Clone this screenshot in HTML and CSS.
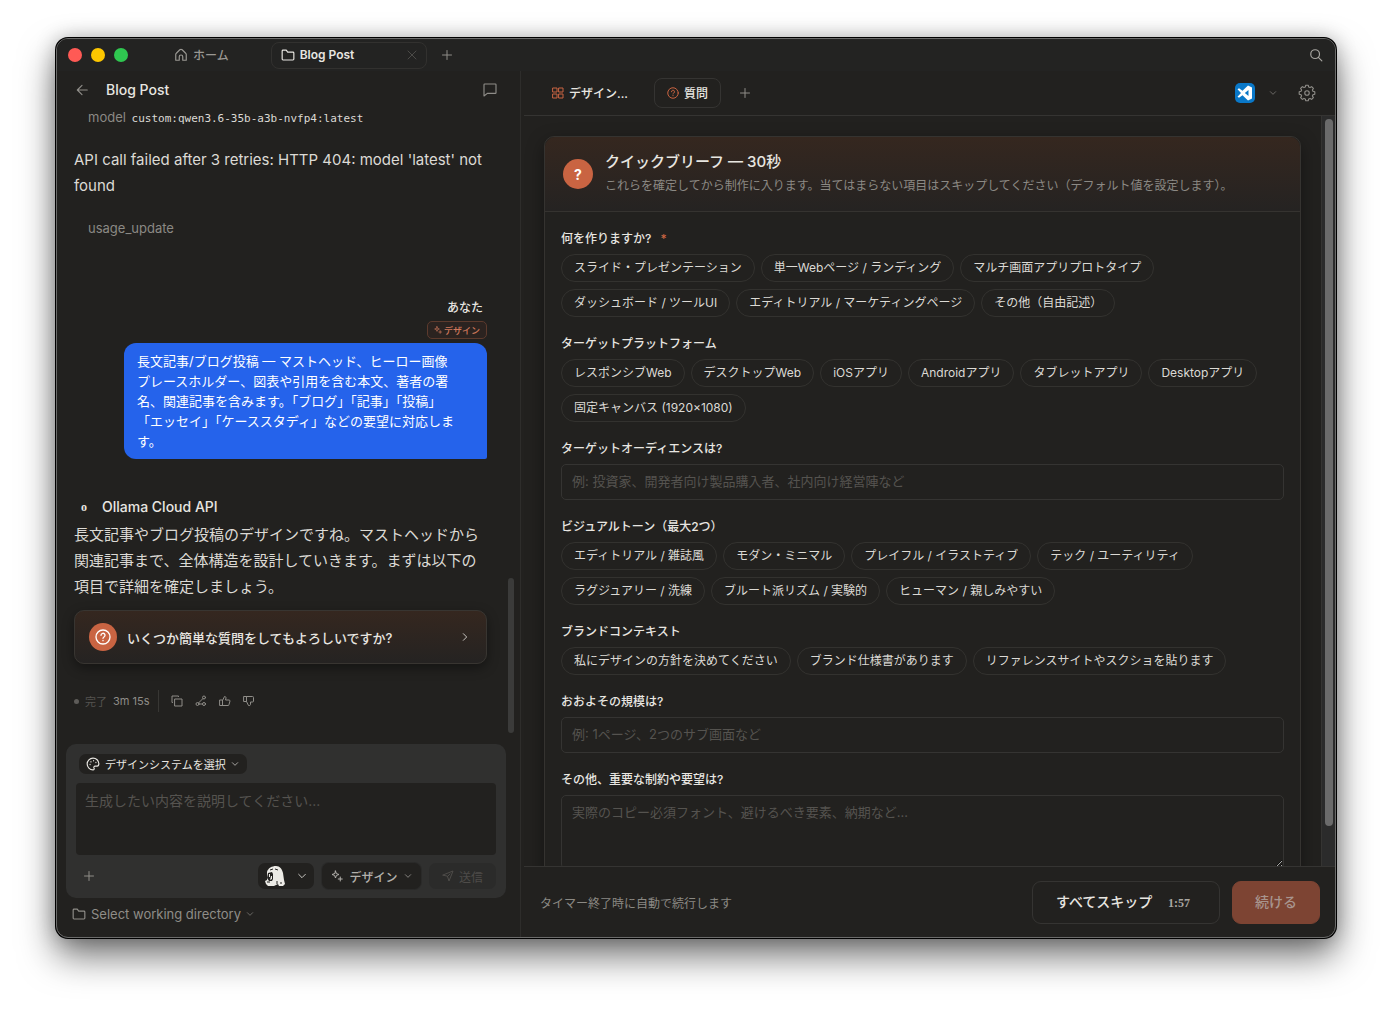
FILE: index.html
```
<!DOCTYPE html>
<html lang="ja">
<head>
<meta charset="UTF-8">
<meta name="viewport" content="width=device-width, initial-scale=1.0">
<title>Blog Post</title>
<link rel="stylesheet" href="styles.css">
</head>
<body>
    <!-- shared icons -->
    <svg class="sprite" aria-hidden="true">
        <symbol id="i-plus" viewBox="0 0 24 24"><path d="M12 3v18M3 12h18"/></symbol>
        <symbol id="i-down" viewBox="0 0 24 24"><path d="M4 8l8 8 8-8"/></symbol>
        <symbol id="i-right" viewBox="0 0 24 24"><path d="M8 4l8 8-8 8"/></symbol>
        <symbol id="i-x" viewBox="0 0 24 24"><path d="M4 4l16 16M20 4L4 20"/></symbol>
        <symbol id="i-back" viewBox="0 0 24 24"><path d="M21 12H4M12 4l-8 8 8 8"/></symbol>
        <symbol id="i-home" viewBox="0 0 24 24"><path d="M3 11a3 3 0 0 1 1-2l6-6q2-1.500 4 0l6 6a3 3 0 0 1 1 2v10h-6v-6a3 3 0 0 0-6 0v6H3z"/></symbol>
        <symbol id="i-folder" viewBox="0 0 24 24"><path d="M2 5a1.500 1.500 0 0 1 1.500-1.500H9L11.500 7H20.500A1.500 1.500 0 0 1 22 8.500V19a1.500 1.500 0 0 1-1.500 1.500h-17A1.500 1.500 0 0 1 2 19z"/></symbol>
        <symbol id="i-search" viewBox="0 0 24 24"><circle cx="10.500" cy="10.500" r="7.500"/><path d="M16 16l6 6"/></symbol>
        <symbol id="i-comment" viewBox="0 0 24 24"><path stroke-width="1.700" d="M4 3h16q1 0 1 1v12q0 1-1 1H8l-5 4V4q0-1 1-1z"/></symbol>
        <symbol id="i-help" viewBox="0 0 24 24"><circle cx="12" cy="12" r="10.500"/><path d="M9 9.500a3 3 0 1 1 4.500 2.500c-1 .6-1.500 1-1.500 2M12 17v.5"/></symbol>
        <symbol id="i-grid" viewBox="0 0 24 24"><path d="M2 2h8v8H2zM14 2h8v8h-8zM2 14h8v8H2zM14 14h8v8h-8z"/></symbol>
        <symbol id="i-gear" viewBox="0 0 24 24"><g stroke-width="1.500"><circle cx="12" cy="12" r="3"/><path d="M19.900 9.700L22.400 10.400V13.600L19.900 14.300 19.200 16 20.500 18.200 18.200 20.500 16 19.200 14.300 19.900 13.600 22.400H10.400L9.700 19.900 8 19.200 5.800 20.500 3.500 18.200 4.800 16 4.100 14.300 1.600 13.600V10.400L4.100 9.700 4.800 8 3.500 5.800 5.800 3.500 8 4.800 9.700 4.100 10.400 1.600H13.600L14.300 4.100 16 4.800 18.200 3.500 20.500 5.800 19.200 8z"/></g></symbol>
        <symbol id="i-spark" viewBox="0 0 24 24"><path d="M9 2l1.800 5.200L16 9l-5.200 1.800L9 16l-1.800-5.200L2 9l5.200-1.800zM18.500 14v8M14.500 18h8"/></symbol>
        <symbol id="i-copy" viewBox="0 0 24 24"><path d="M8 8h14v14H8zM3 15H2V2h13v1"/></symbol>
        <symbol id="i-share" viewBox="0 0 24 24"><circle cx="18" cy="5" r="3"/><circle cx="5" cy="18" r="3"/><circle cx="18" cy="18" r="3"/><path d="M8 18h7M16 7L7 16"/></symbol>
        <symbol id="i-up" viewBox="0 0 24 24"><path d="M2 10h5v11H2zM7 11l4-8c2 0 3 1 3 3l-1 4h7a2 2 0 0 1 2 2l-2 7a2 2 0 0 1-2 2H7"/></symbol>
        <symbol id="i-thumbdown" viewBox="0 0 24 24"><path d="M2 3h5v10H2zM7 3h12a2 2 0 0 1 2 2v7a2 2 0 0 1-2 2h-4v5a3 3 0 0 1-4 2L7 13"/></symbol>
        <symbol id="i-palette" viewBox="0 0 24 24"><path d="M12 2a10 10 0 1 0 0 20c2 0 2.500-1.500 1.700-3-.8-1.700.3-3.300 2-3.300H19c2 0 3-1.500 3-4C22 6 17.500 2 12 2z"/><path d="M7 12.500v.5M8.500 8v.5M13 6v.5M17 9v.5"/></symbol>
        <symbol id="i-send" viewBox="0 0 24 24"><path d="M2 10L22 2l-8 20-3-9zM11 13l5-5"/></symbol>
    </svg>

    <div class="window">
        <header class="titlebar">
            <div class="lights"><span class="red"></span><span class="yellow"></span><span class="green"></span></div>
            <a class="home-tab" href="#"><svg class="icon s14"><use href="#i-home"/></svg><span>ホーム</span></a>
            <div class="file-tab">
                <svg class="icon s14"><use href="#i-folder"/></svg>
                <span>Blog Post</span>
                <button type="button" class="bare close" aria-label="閉じる"><svg class="icon s12"><use href="#i-x"/></svg></button>
            </div>
            <button type="button" class="bare new-tab" aria-label="新しいタブ"><svg class="icon s12"><use href="#i-plus"/></svg></button>
            <button type="button" class="bare search" aria-label="検索"><svg class="icon s14"><use href="#i-search"/></svg></button>
        </header>

        <main class="panes">
            <section class="chat">
                <div class="chat-head">
                    <button type="button" class="bare" aria-label="戻る"><svg class="icon s14"><use href="#i-back"/></svg></button>
                    <h1>Blog Post</h1>
                    <button type="button" class="bare comment" aria-label="コメント"><svg class="icon s16"><use href="#i-comment"/></svg></button>
                </div>

                <div class="chat-log">
                    <div class="meta">model <code>custom:qwen3.6-35b-a3b-nvfp4:latest</code></div>
                    <p class="prose error">API call failed after 3 retries: HTTP 404: model 'latest' not found</p>
                    <div class="meta usage">usage_update</div>

                    <div class="user-msg">
                        <strong>あなた</strong>
                        <span class="badge"><svg class="icon s8"><use href="#i-spark"/></svg>デザイン</span>
                        <p class="bubble">長文記事/ブログ投稿 — マストヘッド、ヒーロー画像プレースホルダー、図表や引用を含む本文、著者の署名、関連記事を含みます。「ブログ」「記事」「投稿」「エッセイ」「ケーススタディ」などの要望に対応します。</p>
                    </div>

                    <div class="agent">
                        <span class="agent-mark">o</span>
                        <strong>Ollama Cloud API</strong>
                    </div>
                    <p class="prose">長文記事やブログ投稿のデザインですね。マストヘッドから関連記事まで、全体構造を設計していきます。まずは以下の項目で詳細を確定しましょう。</p>

                    <button type="button" class="ask-card">
                        <span class="dot"><svg class="icon s16"><use href="#i-help"/></svg></span>
                        <span class="ask-text">いくつか簡単な質問をしてもよろしいですか?</span>
                        <svg class="icon s10"><use href="#i-right"/></svg>
                    </button>

                    <div class="status">
                        <span class="bullet"></span>
                        <span class="done">完了</span>
                        <span class="time">3m 15s</span>
                        <button type="button" class="bare" aria-label="コピー"><svg class="icon s12"><use href="#i-copy"/></svg></button>
                        <button type="button" class="bare" aria-label="共有"><svg class="icon s12"><use href="#i-share"/></svg></button>
                        <button type="button" class="bare" aria-label="良い"><svg class="icon s12"><use href="#i-up"/></svg></button>
                        <button type="button" class="bare" aria-label="悪い"><svg class="icon s12"><use href="#i-thumbdown"/></svg></button>
                    </div>
                    <span class="chat-thumb"></span>
                </div>

                <form class="composer">
                    <button type="button" class="pill system"><svg class="icon s14"><use href="#i-palette"/></svg>デザインシステムを選択<svg class="icon s8"><use href="#i-down"/></svg></button>
                    <textarea aria-label="メッセージ" placeholder="生成したい内容を説明してください..."></textarea>
                    <div class="tools">
                        <button type="button" class="bare add" aria-label="追加"><svg class="icon s12"><use href="#i-plus"/></svg></button>
                        <button type="button" class="pill model" aria-label="モデル">
                            <svg class="avatar" viewBox="0 0 20 20">
                                <path fill="#ecebe6" d="M2 6C3 2 7 0 11 0c4 0 6 3 7 7l1 7 1 4-2 2h-4l-1-2-2 1-2 1H3l-2-2-1-3 2-1z"/>
                                <path fill="#22211f" d="M3 7l4-1 1 2v5l-1 2-3 0-2-3z"/>
                                <path fill="#ecebe6" d="M4 8h1v3H4zM6 10h1v3l-2 1z"/>
                                <path fill="none" stroke="#22211f" d="M5 4l3-1M10 3l3 1M2 16h3M12 15v3M16 16v2"/>
                            </svg>
                            <svg class="icon s10"><use href="#i-down"/></svg>
                        </button>
                        <button type="button" class="pill mode"><svg class="icon s12"><use href="#i-spark"/></svg>デザイン<svg class="icon s8"><use href="#i-down"/></svg></button>
                        <button type="submit" class="pill send" disabled><svg class="icon s12"><use href="#i-send"/></svg>送信</button>
                    </div>
                </form>
                <button type="button" class="bare workdir"><svg class="icon s14"><use href="#i-folder"/></svg>Select working directory<svg class="icon s8"><use href="#i-down"/></svg></button>
            </section>

            <section class="work">
                <nav class="work-tabs">
                    <button type="button" class="tab"><svg class="icon s12 accent"><use href="#i-grid"/></svg><span>デザイン...</span></button>
                    <button type="button" class="tab active"><svg class="icon s12 accent"><use href="#i-help"/></svg><span>質問</span></button>
                    <button type="button" class="bare add-tab" aria-label="タブを追加"><svg class="icon s12"><use href="#i-plus"/></svg></button>
                    <button type="button" class="bare editor" aria-label="エディタで開く">
                        <svg class="vscode" viewBox="0 0 20 20">
                            <rect width="20" height="20" rx="5" fill="#0a78c8"/>
                            <path fill="#fff" fill-rule="evenodd" d="M13 2.500L17 4.500V15.500L13 17.500 7.500 12.200 4 14.800 2.500 13.800 6 10 2.500 6.200 4 5.200 7.500 7.800zM13.500 7L9.800 10 13.500 13z"/>
                        </svg>
                        <svg class="icon s8"><use href="#i-down"/></svg>
                    </button>
                    <button type="button" class="bare gear" aria-label="設定"><svg class="icon s18"><use href="#i-gear"/></svg></button>
                </nav>

                <div class="work-body">
                    <form class="brief" id="brief">
                        <div class="brief-head">
                            <span class="dot q">?</span>
                            <div>
                                <h2>クイックブリーフ — 30秒</h2>
                                <p>これらを確定してから制作に入ります。当てはまらない項目はスキップしてください（デフォルト値を設定します）。</p>
                            </div>
                        </div>
                        <div class="brief-body">
                            <fieldset>
                                <legend>何を作りますか? <span class="req">*</span></legend>
                                <div class="chips">
                                    <button type="button">スライド・プレゼンテーション</button>
                                    <button type="button">単一Webページ / ランディング</button>
                                    <button type="button">マルチ画面アプリプロトタイプ</button>
                                    <button type="button">ダッシュボード / ツールUI</button>
                                    <button type="button">エディトリアル / マーケティングページ</button>
                                    <button type="button">その他（自由記述）</button>
                                </div>
                            </fieldset>
                            <fieldset>
                                <legend>ターゲットプラットフォーム</legend>
                                <div class="chips">
                                    <button type="button">レスポンシブWeb</button>
                                    <button type="button">デスクトップWeb</button>
                                    <button type="button">iOSアプリ</button>
                                    <button type="button">Androidアプリ</button>
                                    <button type="button">タブレットアプリ</button>
                                    <button type="button">Desktopアプリ</button>
                                    <button type="button">固定キャンバス (1920×1080)</button>
                                </div>
                            </fieldset>
                            <div class="field">
                                <label for="audience">ターゲットオーディエンスは?</label>
                                <input type="text" id="audience" placeholder="例: 投資家、開発者向け製品購入者、社内向け経営陣など">
                            </div>
                            <fieldset>
                                <legend>ビジュアルトーン（最大2つ）</legend>
                                <div class="chips">
                                    <button type="button">エディトリアル / 雑誌風</button>
                                    <button type="button">モダン・ミニマル</button>
                                    <button type="button">プレイフル / イラストティブ</button>
                                    <button type="button">テック / ユーティリティ</button>
                                    <button type="button">ラグジュアリー / 洗練</button>
                                    <button type="button">ブルート派リズム / 実験的</button>
                                    <button type="button">ヒューマン / 親しみやすい</button>
                                </div>
                            </fieldset>
                            <fieldset>
                                <legend>ブランドコンテキスト</legend>
                                <div class="chips">
                                    <button type="button">私にデザインの方針を決めてください</button>
                                    <button type="button">ブランド仕様書があります</button>
                                    <button type="button">リファレンスサイトやスクショを貼ります</button>
                                </div>
                            </fieldset>
                            <div class="field">
                                <label for="scale">おおよその規模は?</label>
                                <input type="text" id="scale" placeholder="例: 1ページ、2つのサブ画面など">
                            </div>
                            <div class="field">
                                <label for="notes">その他、重要な制約や要望は?</label>
                                <textarea id="notes" placeholder="実際のコピー必須フォント、避けるべき要素、納期など..."></textarea>
                            </div>
                        </div>
                    </form>
                    <div class="track"><span class="track-thumb"></span></div>
                </div>

                <footer class="work-foot">
                    <span>タイマー終了時に自動で続行します</span>
                    <button type="button" class="skip">すべてスキップ <time>1:57</time></button>
                    <button type="submit" form="brief" class="go">続ける</button>
                </footer>
            </section>
        </main>
    </div>
</body>
</html>
```
FILE: styles.css
```
* {
    box-sizing: border-box;
}

body {
    margin: 0;
    padding: 38px 56px 74px;
    height: 100vh;
    background: #fff;
    color: #e8e6e1;
    font-family: Inter, "Noto Sans CJK JP", sans-serif;
    font-size: 12px;
    overflow: hidden;
}

h1, h2, p, fieldset, legend {
    margin: 0;
    padding: 0;
    border: 0;
}

button, input, textarea {
    font: inherit;
    color: inherit;
}

button {
    padding: 0;
    white-space: nowrap;
}

.sprite {
    display: none;
}

.icon {
    flex: none;
    fill: none;
    stroke: currentColor;
    stroke-width: 2;
    stroke-linecap: round;
    stroke-linejoin: round;
}

.s8 { width: 8px; height: 8px; }
.s10 { width: 10px; height: 10px; }
.s12 { width: 12px; height: 12px; }
.s14 { width: 14px; height: 14px; }
.s16 { width: 16px; height: 16px; }
.s18 { width: 18px; height: 18px; }

.accent {
    color: #c96442;
}

.bare {
    display: flex;
    align-items: center;
    background: none;
    border: 0;
    color: #8f8d88;
}

.window {
    height: 100%;
    display: flex;
    flex-direction: column;
    background: #22211f;
    border: 1px solid #6b6b6a;
    border-radius: 12px;
    box-shadow: 0 0 0 1px #000, 0 18px 36px rgba(0, 0, 0, 0.55), 0 0 20px rgba(0, 0, 0, 0.25);
    overflow: hidden;
}

/* title bar */
.titlebar {
    flex: none;
    height: 32px;
    display: flex;
    align-items: center;
    padding: 0 12px 0 11px;
    background: #232322;
}

.titlebar span {
    padding-bottom: 1px;
}

.lights {
    display: flex;
    gap: 9px;
}

.lights span {
    width: 14px;
    height: 14px;
    border-radius: 50%;
}

.red { background: #ff5a55; }
.yellow { background: #fdc700; }
.green { background: #2fc750; }

.home-tab {
    display: flex;
    align-items: center;
    gap: 5px;
    margin-left: 46px;
    color: #9a9893;
    font-weight: 500;
    text-decoration: none;
}

.file-tab {
    display: flex;
    align-items: center;
    gap: 5px;
    width: 156px;
    height: 27px;
    margin-left: 42px;
    padding: 0 8px 0 9px;
    border: 1px solid #32312f;
    border-radius: 8px;
    font-weight: 600;
}

.close {
    margin-left: auto;
    color: #4c4b48;
}

.new-tab {
    margin-left: 14px;
}

.search {
    margin-left: auto;
    color: #aaa8a3;
}

.panes {
    flex: 1;
    min-height: 0;
    display: grid;
    grid-template-columns: 463px minmax(0, 1fr);
}

/* chat pane */
.chat {
    display: flex;
    flex-direction: column;
    min-height: 0;
}

.chat-head {
    flex: none;
    display: flex;
    align-items: center;
    height: 37px;
    padding: 0 22px 0 18px;
}

.chat-head h1 {
    margin-left: 17px;
    font-size: 14px;
    font-weight: 500;
}

.comment {
    margin-left: auto;
}

.chat-log {
    position: relative;
    flex: 1;
    min-height: 0;
    padding: 0 33px 0 17px;
    overflow: hidden;
}

.meta {
    padding-left: 14px;
    font-size: 13px;
    line-height: 18px;
    color: #8b8984;
}

.meta code {
    margin-left: 2px;
    color: #dcdad5;
    font-family: "DejaVu Sans Mono", monospace;
    font-size: 11px;
}

.prose {
    font-size: 15px;
    line-height: 26px;
    color: #dcdad5;
}

.error {
    margin-top: 19px;
}

.usage {
    margin-top: 20px;
}

.user-msg {
    display: flex;
    flex-direction: column;
    align-items: flex-end;
    margin-top: 62px;
}

.user-msg strong {
    padding-right: 4px;
    line-height: 18px;
    font-weight: 500;
}

.badge {
    display: flex;
    align-items: center;
    gap: 2px;
    height: 18px;
    margin: 4px 0;
    padding: 0 6px;
    border: 1px solid #5c3a2d;
    border-radius: 5px;
    background: #2b2320;
    color: #d0795c;
    font-size: 9px;
    font-weight: 500;
}

.bubble {
    width: 363px;
    padding: 8px 28px 8px 13px;
    border-radius: 12px 12px 2px 12px;
    background: #2563eb;
    color: #fff;
    font-size: 13px;
    line-height: 20px;
}

.agent {
    display: flex;
    align-items: center;
    margin-top: 38px;
    line-height: 20px;
    font-size: 14px;
}

.agent strong {
    font-weight: 500;
}

.agent + .prose {
    margin-top: 5px;
}

.agent-mark {
    width: 20px;
    margin-right: 8px;
    font: 700 12px "Liberation Serif", serif;
    text-align: center;
}

.dot {
    flex: none;
    display: flex;
    align-items: center;
    justify-content: center;
    width: 28px;
    height: 28px;
    border-radius: 50%;
    background: #c96442;
    color: #fff;
}

.ask-card {
    display: flex;
    align-items: center;
    gap: 10px;
    width: 100%;
    height: 54px;
    margin-top: 10px;
    padding: 0 16px 0 14px;
    border: 1px solid #383531;
    border-radius: 10px;
    background: linear-gradient(#35271f, #252322);
    box-shadow: 0 4px 12px rgba(0, 0, 0, 0.4);
    font-size: 13px;
    font-weight: 500;
}

.ask-text {
    flex: 1;
    text-align: left;
}

.status {
    display: flex;
    align-items: center;
    gap: 12px;
    height: 22px;
    margin-top: 26px;
    color: #8f8d88;
    font-size: 11px;
}

.bullet {
    width: 5px;
    height: 5px;
    border-radius: 50%;
    background: #5e5c59;
}

.done {
    margin: 0 -6px;
    color: #55534f;
}

.time {
    height: 22px;
    padding-right: 8px;
    border-right: 1px solid #383734;
    line-height: 22px;
}

.chat-thumb {
    position: absolute;
    right: 6px;
    bottom: 11px;
    width: 6px;
    height: 155px;
    border-radius: 3px;
    background: #3b3b3a;
}

/* composer */
.composer {
    flex: none;
    margin: 0 14px 0 9px;
    padding: 10px 10px 9px;
    border-radius: 10px;
    background: #30302f;
}

.pill {
    display: flex;
    align-items: center;
    justify-content: center;
    border: 0;
    border-radius: 7px;
    background: #22211f;
}

.system {
    gap: 5px;
    height: 20px;
    margin-left: 3px;
    padding: 0 8px 0 7px;
    font-size: 11px;
}

.composer textarea {
    display: block;
    width: 100%;
    height: 72px;
    margin: 9px 0 8px;
    padding: 8px 9px;
    border: 0;
    border-radius: 4px;
    background: #22211f;
    font-size: 14px;
    line-height: 20px;
    resize: none;
}

::placeholder {
    color: #55534f;
}

.tools {
    display: flex;
    align-items: center;
    gap: 8px;
    height: 26px;
}

.add {
    margin: 0 auto 0 7px;
}

.model {
    gap: 12px;
    width: 56px;
    height: 26px;
}

.avatar {
    width: 20px;
    height: 20px;
}

.mode {
    gap: 6px;
    width: 99px;
    height: 26px;
    color: #b3b1ac;
    font-weight: 500;
    box-shadow: 0 0 0 1px #2a2a29;
}

.send {
    gap: 5px;
    width: 67px;
    height: 26px;
    background: #2b2b2a;
    color: #4e4c49;
}

.workdir {
    flex: none;
    gap: 5px;
    height: 39px;
    padding: 0 0 8px 15px;
    font-size: 13px;
}

/* work pane */
.work {
    display: flex;
    flex-direction: column;
    min-height: 0;
    padding-left: 3px;
    border-left: 1px solid #2e2d2b;
}

.work-tabs {
    flex: none;
    display: flex;
    align-items: center;
    height: 45px;
    padding: 0 19px 0 15px;
    border-bottom: 1px solid #353432;
}

.tab {
    display: flex;
    align-items: center;
    gap: 5px;
    height: 30px;
    padding: 0 12px;
    border: 1px solid transparent;
    border-radius: 8px;
    background: none;
    font-weight: 500;
}

.tab span {
    padding-bottom: 2px;
}

.tab.active {
    margin-left: 13px;
    border-color: #353432;
}

.add-tab {
    margin-left: 18px;
}

.editor {
    gap: 14px;
    margin-left: auto;
}

.vscode {
    width: 20px;
    height: 20px;
}

.gear {
    margin-left: 21px;
}

.work-body {
    flex: 1;
    min-height: 0;
    display: flex;
    overflow: hidden;
}

.brief {
    flex: 1;
    min-width: 0;
    height: max-content;
    margin: 20px;
    border: 1px solid #353330;
    border-radius: 10px;
    box-shadow: 0 6px 18px rgba(0, 0, 0, 0.4);
}

.brief-head {
    display: flex;
    align-items: center;
    gap: 12px;
    height: 75px;
    padding: 0 18px;
    border-bottom: 1px solid #353330;
    border-radius: 10px 10px 0 0;
    background: linear-gradient(#35271f, #252322);
}

.q {
    width: 30px;
    height: 30px;
    font-size: 14px;
    font-weight: 700;
}

.brief h2 {
    font-size: 15px;
    font-weight: 500;
    line-height: 24px;
}

.brief-head p {
    color: #8b8984;
    line-height: 24px;
}

.brief-body {
    display: flex;
    flex-direction: column;
    gap: 18px;
    padding: 18px 16px;
}

legend, .field label {
    display: block;
    height: 18px;
    margin-bottom: 6px;
    font-weight: 500;
    line-height: 18px;
}

.req {
    margin-left: 6px;
    color: #c96442;
}

.chips {
    display: flex;
    flex-wrap: wrap;
    gap: 7px 6px;
}

.chips button {
    height: 28px;
    padding: 0 12px 3px;
    border: 1px solid #33322f;
    border-radius: 14px;
    background: none;
    color: #dcdad5;
}

.field input, .field textarea {
    display: block;
    width: 100%;
    height: 36px;
    padding: 0 10px 3px;
    border: 1px solid #353432;
    border-radius: 5px;
    background: none;
    font-size: 13px;
}

.field textarea {
    height: 74px;
    padding: 7px 10px;
    line-height: 18px;
    resize: vertical;
}

.track {
    flex: none;
    width: 14px;
    padding: 3px;
    border-left: 1px solid #353432;
    background: #2b2b2b;
}

.track-thumb {
    display: block;
    width: 8px;
    height: 95%;
    border-radius: 4px;
    background: #6b6b6b;
}

.work-foot {
    flex: none;
    display: flex;
    align-items: center;
    gap: 12px;
    height: 71px;
    padding: 0 15px 0 16px;
    border-top: 1px solid #353432;
    color: #8b8984;
}

.skip, .go {
    height: 43px;
    padding-bottom: 2px;
    border: 1px solid #353432;
    border-radius: 9px;
    background: none;
    font-size: 14px;
    font-weight: 500;
}

.skip {
    width: 188px;
    margin-left: auto;
    padding-right: 6px;
    color: #e8e6e1;
}

.skip time {
    margin-left: 12px;
    color: #a9a7a2;
    font: 700 12px "Liberation Serif", serif;
}

.go {
    width: 88px;
    border-color: #7d4433;
    background: #7d4433;
    color: #a8958e;
}
```
